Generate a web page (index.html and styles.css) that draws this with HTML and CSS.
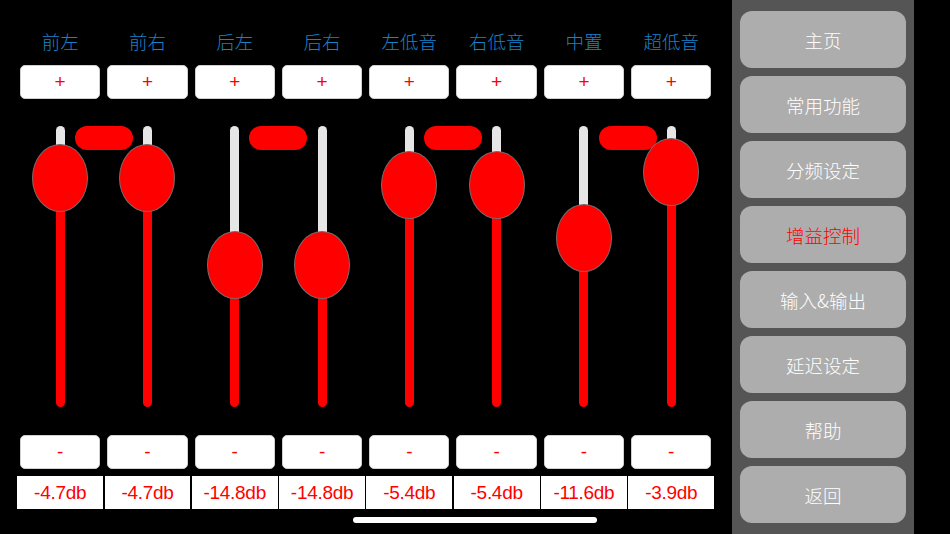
FILE: index.html
```html
<!DOCTYPE html>
<html lang="zh-CN">
<head>
    <meta charset="UTF-8">
    <meta name="viewport" content="width=device-width, initial-scale=1.0">
    <title>增益控制</title>
    <link rel="stylesheet" href="styles.css">
</head>
<body>
    <div class="screen">
        <div class="mixer">
            <div class="pair">
                <span class="link"></span>
                <div class="channel">
                    <div class="ch-name">前左</div>
                    <button class="step">+</button>
                    <div class="fader"><div class="track" style="--pos:52px"></div><div class="knob" style="top:52px"></div></div>
                    <button class="step">-</button>
                    <div class="level">-4.7db</div>
                </div>
                <div class="channel">
                    <div class="ch-name">前右</div>
                    <button class="step">+</button>
                    <div class="fader"><div class="track" style="--pos:52px"></div><div class="knob" style="top:52px"></div></div>
                    <button class="step">-</button>
                    <div class="level">-4.7db</div>
                </div>
            </div>
            <div class="pair">
                <span class="link"></span>
                <div class="channel">
                    <div class="ch-name">后左</div>
                    <button class="step">+</button>
                    <div class="fader"><div class="track" style="--pos:139px"></div><div class="knob" style="top:139px"></div></div>
                    <button class="step">-</button>
                    <div class="level">-14.8db</div>
                </div>
                <div class="channel">
                    <div class="ch-name">后右</div>
                    <button class="step">+</button>
                    <div class="fader"><div class="track" style="--pos:139px"></div><div class="knob" style="top:139px"></div></div>
                    <button class="step">-</button>
                    <div class="level">-14.8db</div>
                </div>
            </div>
            <div class="pair">
                <span class="link"></span>
                <div class="channel">
                    <div class="ch-name">左低音</div>
                    <button class="step">+</button>
                    <div class="fader"><div class="track" style="--pos:59px"></div><div class="knob" style="top:59px"></div></div>
                    <button class="step">-</button>
                    <div class="level">-5.4db</div>
                </div>
                <div class="channel">
                    <div class="ch-name">右低音</div>
                    <button class="step">+</button>
                    <div class="fader"><div class="track" style="--pos:59px"></div><div class="knob" style="top:59px"></div></div>
                    <button class="step">-</button>
                    <div class="level">-5.4db</div>
                </div>
            </div>
            <div class="pair">
                <span class="link"></span>
                <div class="channel">
                    <div class="ch-name">中置</div>
                    <button class="step">+</button>
                    <div class="fader"><div class="track" style="--pos:112px"></div><div class="knob" style="top:112px"></div></div>
                    <button class="step">-</button>
                    <div class="level">-11.6db</div>
                </div>
                <div class="channel">
                    <div class="ch-name">超低音</div>
                    <button class="step">+</button>
                    <div class="fader"><div class="track" style="--pos:46px"></div><div class="knob" style="top:46px"></div></div>
                    <button class="step">-</button>
                    <div class="level">-3.9db</div>
                </div>
            </div>
        </div>
        <nav class="side">
            <button class="menu-btn">主页</button>
            <button class="menu-btn">常用功能</button>
            <button class="menu-btn">分频设定</button>
            <button class="menu-btn active">增益控制</button>
            <button class="menu-btn">输入&amp;输出</button>
            <button class="menu-btn">延迟设定</button>
            <button class="menu-btn">帮助</button>
            <button class="menu-btn">返回</button>
        </nav>
        <div class="home-bar"></div>
    </div>
</body>
</html>
```

FILE: styles.css
```css
/* gain control page */
body {
    margin: 0;
    background: #000;
    font-family: "Liberation Sans", "Noto Sans CJK SC", sans-serif;
}
.screen {
    position: relative;
    width: 950px;
    height: 534px;
    display: flex;
    background: #000;
    overflow: hidden;
}
.mixer {
    width: 732px;
    box-sizing: border-box;
    padding: 29px 0 0 16.5px;
    display: flex;
}
.pair {
    position: relative;
    display: flex;
}
.link {
    position: absolute;
    top: 97px;
    left: 50%;
    width: 58px;
    height: 24px;
    margin-left: -29px;
    border-radius: 12px;
    background: #ff0000;
}
.channel {
    width: 87.3px;
    display: flex;
    flex-direction: column;
    align-items: stretch;
}
.ch-name {
    height: 24px;
    line-height: 24px;
    text-align: center;
    color: #1a80c8;
    font-size: 18.5px;
    font-weight: 300;
    font-family: "Noto Sans CJK SC", sans-serif;
}
.step {
    margin: 12px 3.5px 0;
    height: 34px;
    padding: 0;
    border: 1px solid #d0d0d0;
    border-radius: 5px;
    background: #fff;
    color: #ff0000;
    font-family: "Liberation Sans", sans-serif;
    font-size: 19px;
    line-height: 30px;
}
.fader {
    position: relative;
    margin-top: 27px;
    height: 281px;
}
.fader + .step {
    margin-top: 28px;
}
.track {
    width: 9px;
    height: 100%;
    margin: 0 auto;
    border-radius: 5px;
    background: linear-gradient(#e6e6e6 var(--pos), #ff0000 var(--pos));
}
.knob {
    position: absolute;
    left: 50%;
    width: 54px;
    height: 66px;
    transform: translate(-50%, -50%);
    border-radius: 50%;
    background: #ff0000;
    border: 1px solid #7a6a6a;
    box-sizing: content-box;
}
.level {
    margin: 7px 0.75px 0;
    height: 33px;
    line-height: 34px;
    background: #fff;
    color: #ff0000;
    text-align: center;
    font-size: 19px;
    letter-spacing: -0.3px;
}
.side {
    width: 182px;
    box-sizing: border-box;
    padding: 11px 8px 0;
    background: #555555;
    display: flex;
    flex-direction: column;
    gap: 8px;
}
.menu-btn {
    height: 57px;
    border: none;
    border-radius: 12px;
    background: #adadad;
    color: #fff;
    font-size: 18.5px;
    font-weight: 300;
    font-family: "Noto Sans CJK SC", sans-serif;
    padding: 0;
}
.menu-btn.active {
    color: #ff0000;
}
.home-bar {
    position: absolute;
    left: 50%;
    bottom: 11px;
    width: 244px;
    height: 6px;
    margin-left: -122px;
    border-radius: 3px;
    background: #fff;
}
```
